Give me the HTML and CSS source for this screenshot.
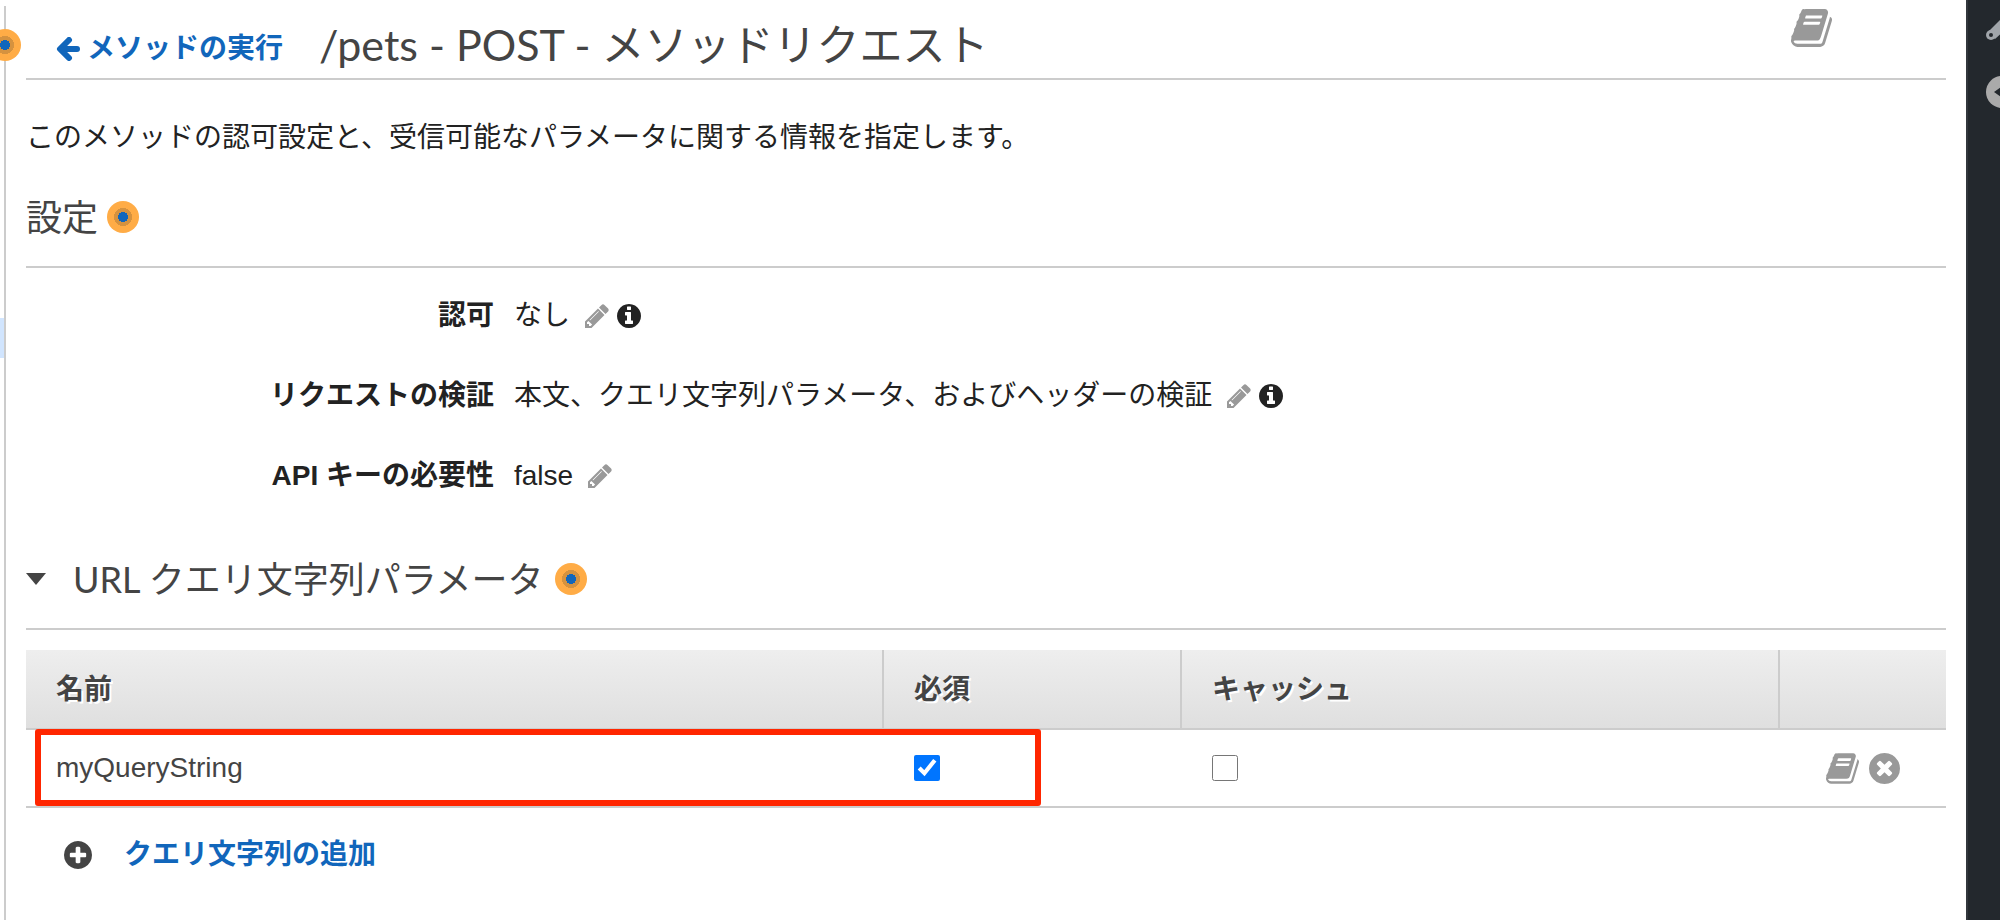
FILE: index.html
```
<!DOCTYPE html>
<html lang="ja">
<head>
    <meta charset="utf-8">
    <title>/pets - POST - メソッドリクエスト</title>
    <meta name="viewport" content="width=device-width, initial-scale=1">
    <link rel="stylesheet" href="styles.css">
</head>
<body>

<!-- icons -->
<svg class="sprite" aria-hidden="true">
    <symbol id="book" viewBox="0 128 1664 1536"><path d="M1639 478q40 57 18 129l-275 906q-19 64-76.5 107.5T1183 1664H260q-77 0-148.500-53.500T12 1479q-24-67-2-127 0-4 3-27t4-37q1-8-3-21.500t-3-19.500q2-11 8-21t16.500-23.500T52 1179q23-38 45-91.500t30-91.500q3-10 .5-30t-.5-28q3-11 17-28t17-23q21-36 42-92t25-90q1-9-2.500-32t.5-28q4-13 22-30.500t22-22.500q19-26 42.500-84.500T340 411q1-8-3-25.500t-2-26.500q2-8 9-18t18-23 17-21q8-12 16.500-30.500t15-35 16-36 19.500-32T470 140t36-11.500T554 134l-1 3q38-9 51-9h761q74 0 114 56t18 130l-274 906q-36 119-71.500 153.500T1023 1408H154q-27 0-38 15-11 16-1 43 24 70 144 70h923q29 0 56-15.500t35-41.500l300-987q7-22 5-57 38 15 59 43zM575 480q-4 13 2 22.500t20 9.500h608q13 0 25.500-9.500T1247 480l21-64q4-13-2-22.500t-20-9.500H638q-13 0-25.500 9.500T596 416zM492 736q-4 13 2 22.500t20 9.500h608q13 0 25.500-9.500T1164 736l21-64q4-13-2-22.500t-20-9.500H555q-13 0-25.500 9.500T513 672z"/></symbol>
    <symbol id="pencil" viewBox="128 128 1536 1536"><path d="M491 1536l91-91-235-235-91 91v107h128v128h107zM1014 608q0-22-22-22-10 0-17 7l-542 542q-7 7-7 17 0 22 22 22 10 0 17-7l542-542q7-7 7-17zM960 416l416 416-832 832H128v-416zM1643 512q0 53-37 90l-166 166-416-416 166-165q36-38 90-38 53 0 91 38l235 234q37 39 37 91z"/></symbol>
    <symbol id="info" viewBox="128 128 1536 1536"><path d="M1152 1376v-160q0-14-9-23t-23-9h-96V672q0-14-9-23t-23-9H672q-14 0-23 9t-9 23v160q0 14 9 23t23 9h96v320h-96q-14 0-23 9t-9 23v160q0 14 9 23t23 9h448q14 0 23-9t9-23zM1024 480V320q0-14-9-23t-23-9H800q-14 0-23 9t-9 23v160q0 14 9 23t23 9h192q14 0 23-9t9-23zM1664 896q0 209-103 385.500T1281.500 1561 896 1664t-385.500-103T231 1281.500 128 896t103-385.500T510.500 231 896 128t385.500 103T1561 510.500 1664 896z"/></symbol>
    <symbol id="times" viewBox="128 128 1536 1536"><path d="M1277 1122q0-26-19-45L1077 896l181-181q19-19 19-45 0-27-19-46l-90-90q-19-19-46-19-26 0-45 19L896 715 715 534q-19-19-45-19-27 0-46 19l-90 90q-19 19-19 46 0 26 19 45l181 181-181 181q-19 19-19 45 0 27 19 46l90 90q19 19 46 19 26 0 45-19l181-181 181 181q19 19 45 19 27 0 46-19l90-90q19-19 19-46zM1664 896q0 209-103 385.500T1281.500 1561 896 1664t-385.500-103T231 1281.500 128 896t103-385.500T510.500 231 896 128t385.500 103T1561 510.500 1664 896z"/></symbol>
    <symbol id="plus" viewBox="128 128 1536 1536"><path d="M1344 960V832q0-26-19-45t-45-19h-256V512q0-26-19-45t-45-19H832q-26 0-45 19t-19 45v256H512q-26 0-45 19t-19 45v128q0 26 19 45t45 19h256v256q0 26 19 45t45 19h128q26 0 45-19t19-45v-256h256q26 0 45-19t19-45zM1664 896q0 209-103 385.500T1281.500 1561 896 1664t-385.500-103T231 1281.500 128 896t103-385.500T510.500 231 896 128t385.500 103T1561 510.500 1664 896z"/></symbol>
</svg>

<div class="wrap">
    <div class="tree">
        <span class="tree-active"></span>
        <span class="dot tree-dot"></span>
    </div>

    <main class="main">
        <header class="head">
            <a class="back" href="#"><svg class="arrow" viewBox="0 0 24 24" aria-hidden="true"><path d="M13 3L4 12l9 9M5 12h16" fill="none" stroke="currentColor" stroke-width="6" stroke-linecap="round" stroke-linejoin="round"/></svg>メソッドの実行</a>
            <h1>/pets - POST - メソッドリクエスト</h1>
            <button class="icon-btn doc" type="button" aria-label="ドキュメント"><svg class="book-lg"><use href="#book"/></svg></button>
        </header>

        <p class="desc">このメソッドの認可設定と、受信可能なパラメータに関する情報を指定します。</p>

        <h2 class="settings-title">設定 <span class="dot"></span></h2>

        <dl class="settings">
            <dt>認可</dt>
            <dd>なし
                <button class="icon-btn edit" type="button" aria-label="編集"><svg class="icon"><use href="#pencil"/></svg></button>
                <button class="icon-btn info" type="button" aria-label="情報"><svg class="icon"><use href="#info"/></svg></button>
            </dd>
            <dt>リクエストの検証</dt>
            <dd>本文、クエリ文字列パラメータ、およびヘッダーの検証
                <button class="icon-btn edit" type="button" aria-label="編集"><svg class="icon"><use href="#pencil"/></svg></button>
                <button class="icon-btn info" type="button" aria-label="情報"><svg class="icon"><use href="#info"/></svg></button>
            </dd>
            <dt>API キーの必要性</dt>
            <dd>false
                <button class="icon-btn edit" type="button" aria-label="編集"><svg class="icon"><use href="#pencil"/></svg></button>
            </dd>
        </dl>

        <h2 class="query-title"><span class="caret"></span>URL クエリ文字列パラメータ <span class="dot"></span></h2>

        <div class="params">
            <table>
                <colgroup>
                    <col>
                    <col class="col-required">
                    <col class="col-cache">
                    <col class="col-actions">
                </colgroup>
                <thead>
                    <tr>
                        <th>名前</th>
                        <th>必須</th>
                        <th>キャッシュ</th>
                        <th></th>
                    </tr>
                </thead>
                <tbody>
                    <tr>
                        <td>myQueryString</td>
                        <td><input type="checkbox" aria-label="必須" checked></td>
                        <td><input type="checkbox" aria-label="キャッシュ"></td>
                        <td>
                            <div class="actions">
                                <button class="icon-btn" type="button" aria-label="ドキュメント"><svg class="book-sm"><use href="#book"/></svg></button>
                                <button class="icon-btn" type="button" aria-label="削除"><svg class="remove"><use href="#times"/></svg></button>
                            </div>
                        </td>
                    </tr>
                </tbody>
            </table>
            <div class="mark"></div>
        </div>

        <div class="add">
            <svg class="plus" aria-hidden="true"><use href="#plus"/></svg>
            <a href="#">クエリ文字列の追加</a>
        </div>
    </main>

    <aside class="side">
        <svg class="side-tool" viewBox="0 0 32 32" aria-hidden="true"><path d="M2 16L21 -3l8 8L9 23z" fill="#a0a5aa"/><circle cx="5" cy="19" r="5" fill="#a0a5aa"/><circle cx="5" cy="19" r="2" fill="#23282d"/></svg>
        <svg class="side-collapse" viewBox="0 0 32 32" aria-hidden="true"><circle cx="16" cy="16" r="16" fill="#aaa"/><path d="M8 16l10-7v14z" fill="#23282d"/></svg>
    </aside>
</div>

</body>
</html>
```
FILE: styles.css
```
* { box-sizing:border-box;}
body,h1,h2,p,dl,dd { margin:0; padding:0;}
body {
    background:#fff;
    color:#222;
    font-family:"Liberation Sans", "Noto Sans CJK JP", sans-serif;
    font-size:28px;
    line-height:40px;}
a { color:#1166bb; font-weight:bold; text-decoration:none;}
h1,h2 {
    color:#444;
    font-family:Lato, "Noto Sans CJK JP", sans-serif;
    font-weight:normal;}
h2 {
    display:flex;
    align-items:center;
    border-bottom:2px solid #ccc;
    font-size:36px;
    line-height:46px;}
svg { display:block; fill:currentColor;}
.sprite { position:absolute; width:0; height:0;}
.icon-btn { background:none; border:0; padding:0; color:#999; cursor:pointer;}

.wrap { display:flex; min-height:100vh; overflow:hidden;}

/* left edge of the resource tree */
.tree { position:relative; width:6px; margin-top:6px; border-right:2px solid #ccc;}
.tree-active { position:absolute; top:312px; left:0; width:4px; height:40px; background:#d1e5fe;}
.tree-dot { position:absolute; top:23px; left:-11px;}

.dot {
    display:block;
    flex:none;
    width:32px;
    height:32px;
    border-radius:50%;
    background:radial-gradient(circle, #1166bb 5px, #d5923f 5px, #d5923f 9px, #ffac46 9px);}

.main { flex:1; min-width:0; padding:0 20px;}

.head { display:flex; align-items:baseline; height:80px; padding:15px 0 0 30px; border-bottom:2px solid #ccc;}
.back { display:flex; align-items:center; gap:7px;}
.arrow { width:24px; height:24px;}
h1 { margin-left:36px; font-size:43px; line-height:60px;}
.doc { align-self:flex-start; margin:-6px 114px 0 auto;}
.book-lg { width:41px; height:38px;}

.desc { margin-top:38px;}

.settings-title { gap:9px; margin-top:36px; padding-bottom:26px;}

.settings { display:grid; grid-template-columns:468px 1fr; gap:40px 20px; margin-top:28px;}
dt { text-align:right; font-weight:bold;}
dd { display:flex; align-items:center;}
.icon { width:24px; height:24px;}
.edit { margin-left:15px;}
.info { margin-left:8px; color:#222;}

.query-title { gap:11px; margin-top:60px; padding-bottom:26px;}
.caret {
    width:20px;
    margin-right:16px;
    border:10px solid transparent;
    border-top:12px solid #444;
    border-bottom:0;}

.params { position:relative; margin-top:20px;}
table { width:100%; border-collapse:separate; border-spacing:0; table-layout:fixed; color:#444;}
.col-required { width:298px;}
.col-cache { width:598px;}
.col-actions { width:166px;}
th,td { padding:0 30px; border-bottom:2px solid #ccc; text-align:left;}
th {
    height:80px;
    padding-top:2px;
    border-right:2px solid #ccc;
    background:linear-gradient(#eee, #dfdfdf);
    text-shadow:2px 2px 0 #fff;}
th:last-child { border-right:0;}
td { height:78px;}
td:last-child { padding-right:46px;}
input { display:block; width:26px; height:26px; margin:0; accent-color:#0075ff;}
.actions { display:flex; align-items:center; justify-content:flex-end; gap:10px;}
.book-sm { width:33px; height:31px;}
.remove { width:31px; height:31px;}

/* highlight round the new parameter */
.mark {
    position:absolute;
    top:79px;
    left:9px;
    width:1006px;
    height:77px;
    border:6px solid #ff2600;
    border-radius:3px;
    pointer-events:none;}

.add { display:flex; align-items:center; gap:32px; margin-top:27px; padding-left:38px; color:#444;}
.plus { width:28px; height:28px;}

.side { width:34px; padding:16px 0 0 18px; overflow:hidden; border-left:2px solid #32373c; background:#23282d;}
.side-tool,.side-collapse { width:32px; height:32px;}
.side-collapse { margin-top:28px;}
```
